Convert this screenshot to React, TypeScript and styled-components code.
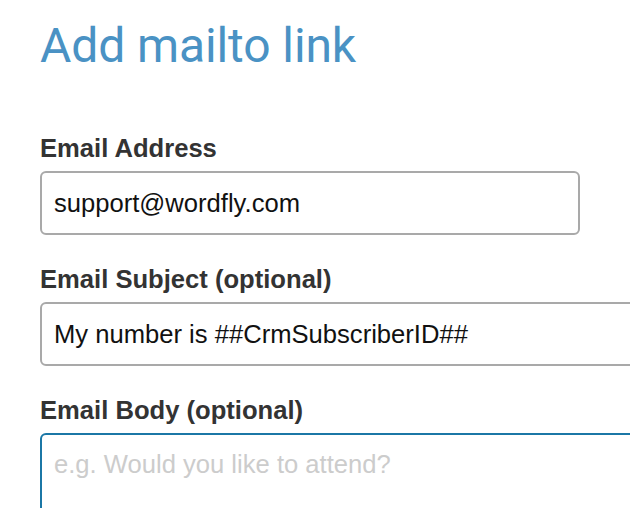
import React from "react";
import styled, { createGlobalStyle } from "styled-components";

const GlobalStyle = createGlobalStyle`
  html, body {
    margin: 0;
    padding: 0;
    background: #ffffff;
    overflow: hidden;
  }
  body {
    font-family: "Liberation Sans", Arial, sans-serif;
  }
`;

const Page = styled.div`
  width: 630px;
  height: 508px;
  padding: 18px 0 0 40px;
  box-sizing: border-box;
  overflow: hidden;
`;

const Title = styled.h1`
  margin: 0 0 59px;
  font-family: Roboto, "Open Sans", sans-serif;
  font-weight: 400;
  font-size: 48px;
  line-height: 56px;
  color: #4a92c4;
  letter-spacing: -0.1px;
`;

const Form = styled.form`
  display: flex;
  flex-direction: column;
  gap: 29px;
  margin: 0;
`;

const Field = styled.div`
  display: flex;
  flex-direction: column;
  gap: 8px;
`;

const Label = styled.label`
  font-family: "Liberation Sans", Arial, sans-serif;
  font-weight: 700;
  font-size: 25.6px;
  line-height: 30px;
  color: #333333;
`;

const TextInput = styled.input<{ $wide?: boolean }>`
  box-sizing: border-box;
  width: ${(p) => (p.$wide ? "640px" : "540px")};
  height: 64px;
  padding: 0 12px;
  border: 2px solid #a9a9a9;
  border-radius: 6px;
  font-family: "Liberation Sans", Arial, sans-serif;
  font-size: 25.6px;
  line-height: 30px;
  color: #111111;
  background: #ffffff;
  outline: none;
`;

const TextArea = styled.textarea`
  box-sizing: border-box;
  width: 640px;
  height: 140px;
  padding: 14px 12px;
  border: 2px solid #1b77a6;
  border-radius: 6px;
  font-family: "Liberation Sans", Arial, sans-serif;
  font-size: 25.6px;
  line-height: 30px;
  color: #111111;
  background: #ffffff;
  outline: none;
  resize: none;
  &::placeholder {
    color: #cccccc;
  }
`;

export default function App() {
  return (
    <>
      <GlobalStyle />
      <Page>
        <Title>Add mailto link</Title>
        <Form onSubmit={(e) => e.preventDefault()}>
          <Field>
            <Label htmlFor="email">Email Address</Label>
            <TextInput id="email" readOnly defaultValue="support@wordfly.com" />
          </Field>
          <Field>
            <Label htmlFor="subject">Email Subject (optional)</Label>
            <TextInput
              id="subject"
              $wide
              readOnly
              defaultValue="My number is ##CrmSubscriberID##"
            />
          </Field>
          <Field>
            <Label htmlFor="body">Email Body (optional)</Label>
            <TextArea id="body" placeholder="e.g. Would you like to attend?" />
          </Field>
        </Form>
      </Page>
    </>
  );
}
